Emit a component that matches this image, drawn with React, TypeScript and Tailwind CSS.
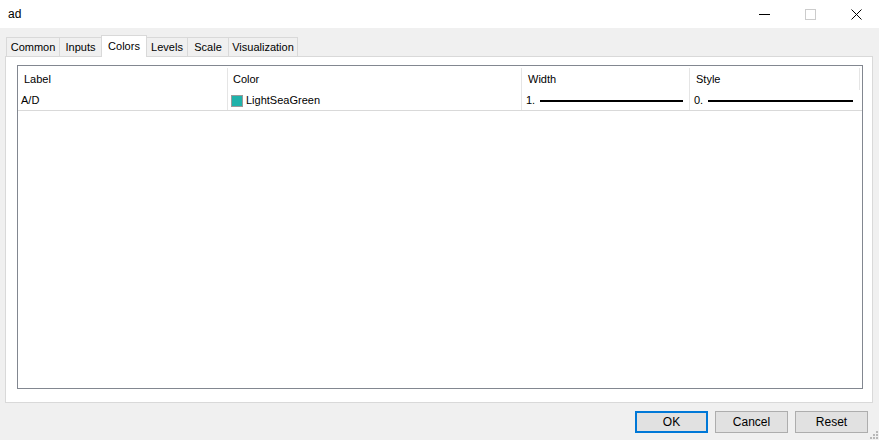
import React from "react";

const font = { fontFamily: '"Liberation Sans", Arial, sans-serif' };

const tabs = [
    { label: "Common", w: "w-[54px]" },
    { label: "Inputs", w: "w-[43px]" },
    { label: "Colors", w: "w-[46px]" },
    { label: "Levels", w: "w-[42px]" },
    { label: "Scale", w: "w-[42px]" },
    { label: "Visualization", w: "w-[70px]" },
];

const Tab = ({ label, w, active }: { label: string; w: string; active: boolean }) => {
    if (active) {
        return (
            <div className={w + " h-[22px] -ml-[1px] bg-white border border-b-0 border-[#d9d9d9] flex items-center justify-center text-[11px] text-black -mb-[1px] relative z-10"}>
                {label}
            </div>
        );
    }
    return (
        <div className={w + " h-[19px] bg-[#f0f0f0] border border-b-0 border-[#d9d9d9] -ml-[1px] first:ml-0 flex items-center justify-center pt-[1px] text-[11px] text-black"}>
            {label}
        </div>
    );
};

const Button = ({ label, primary }: { label: string; primary?: boolean }) => (
    <button
        className={
            "w-[73px] h-[22px] bg-[#e1e1e1] text-[12px] text-black flex items-center justify-center " +
            (primary ? "border-2 border-[#0078d7]" : "border border-[#adadad]")
        }
    >
        {label}
    </button>
);

export default function App() {
    return (
        <div className="w-[879px] h-[440px] bg-[#f0f0f0] flex flex-col relative overflow-hidden" style={font}>
            {/* title bar */}
            <div className="h-[28px] bg-white flex items-center justify-between shrink-0">
                <div className="pl-[8px] text-[12px] text-black">ad</div>
                <div className="flex items-center h-full">
                    <div className="w-[46px] h-full flex items-center justify-center">
                        <svg width="11" height="11" viewBox="0 0 11 11">
                            <line x1="0" y1="5.5" x2="11" y2="5.5" stroke="#000" strokeWidth="1" />
                        </svg>
                    </div>
                    <div className="w-[46px] h-full flex items-center justify-center">
                        <svg width="11" height="11" viewBox="0 0 11 11">
                            <rect x="0.5" y="0.5" width="10" height="10" fill="none" stroke="#cccccc" strokeWidth="1" />
                        </svg>
                    </div>
                    <div className="w-[46px] h-full flex items-center justify-center">
                        <svg width="11" height="11" viewBox="0 0 11 11">
                            <path d="M0.5 0.5 L10.5 10.5 M10.5 0.5 L0.5 10.5" stroke="#000" strokeWidth="1" />
                        </svg>
                    </div>
                </div>
            </div>

            {/* tabs + panel */}
            <div className="px-[5px] pt-[7px] flex flex-col">
                <div className="flex items-end h-[21px] pl-[1px]">
                    {tabs.map((t) => (
                        <Tab key={t.label} label={t.label} w={t.w} active={t.label === "Colors"} />
                    ))}
                </div>
                <div className="w-[868px] h-[347px] bg-white border border-[#d9d9d9] pt-[8px] pl-[11px]">
                    <div className="w-[846px] h-[324px] border border-[#828790] flex flex-col text-[11px] text-black">
                        <div className="flex h-[24px] pt-[2px]">
                            <div className="w-[210px] border-r border-[#e5e5e5] pl-[6px] flex items-center">Label</div>
                            <div className="w-[294px] border-r border-[#e5e5e5] pl-[5px] flex items-center">Color</div>
                            <div className="w-[168px] border-r border-[#e5e5e5] pl-[6px] flex items-center">Width</div>
                            <div className="w-[170px] border-r border-[#e5e5e5] pl-[6px] flex items-center">Style</div>
                        </div>
                        <div className="flex h-[21px] border-b border-[#d9d9d9]">
                            <div className="w-[210px] border-r border-[#e5e5e5] pl-[3px] pt-[1px] flex items-center">A/D</div>
                            <div className="w-[294px] border-r border-[#e5e5e5] pl-[3px] pt-[1px] flex items-center gap-[3px]">
                                <span className="w-[12px] h-[12px] bg-[#20b2aa] border border-[#9a9a9a] shrink-0" />
                                LightSeaGreen
                            </div>
                            <div className="w-[168px] border-r border-[#e5e5e5] pl-[4px] pr-[6px] pt-[1px] flex items-center gap-[5px]">
                                <span>1.</span>
                                <span className="flex-1 h-[2px] bg-black" />
                            </div>
                            <div className="w-[170px] pl-[4px] pr-[7px] pt-[1px] flex items-center gap-[5px]">
                                <span>0.</span>
                                <span className="flex-1 h-[2px] bg-black" />
                            </div>
                        </div>
                    </div>
                </div>
            </div>

            {/* buttons */}
            <div className="flex justify-end gap-[7px] pr-[11px] pt-[8px]">
                <Button label="OK" primary />
                <Button label="Cancel" />
                <Button label="Reset" />
            </div>

            {/* resize grip */}
            <svg className="absolute right-[1px] bottom-[1px]" width="8" height="8" viewBox="0 0 8 8">
                <rect x="6" y="0" width="2" height="2" fill="#b8b8b8" />
                <rect x="3" y="3" width="2" height="2" fill="#b8b8b8" />
                <rect x="6" y="3" width="2" height="2" fill="#b8b8b8" />
                <rect x="0" y="6" width="2" height="2" fill="#b8b8b8" />
                <rect x="3" y="6" width="2" height="2" fill="#b8b8b8" />
                <rect x="6" y="6" width="2" height="2" fill="#b8b8b8" />
            </svg>
        </div>
    );
}
